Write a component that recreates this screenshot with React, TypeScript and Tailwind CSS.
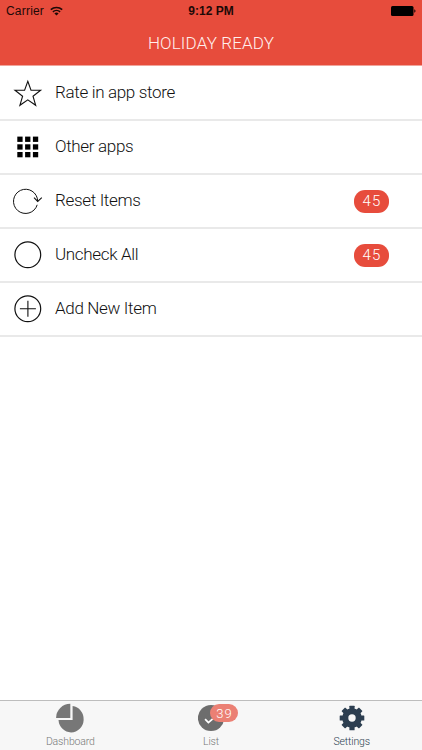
import type { ReactNode } from "react";

function StatusBar() {
  return (
    <div className="flex h-[22px] items-center justify-between pl-[6px] pr-[6px] font-['Liberation_Sans',sans-serif] text-[12px] leading-none text-[#1d0907]">
      <div className="flex flex-1 items-center gap-[6px]">
        <span className="tracking-[0.2px]">Carrier</span>
        <svg width="13" height="10" viewBox="0 0 13 10" fill="none" stroke="currentColor">
          <path d="M.8 3.7a8.3 8.3 0 0 1 11.4 0" strokeWidth="1.6" />
          <path d="M2.9 5.9a5.2 5.2 0 0 1 7.2 0" strokeWidth="1.5" />
          <path d="M6.5 9.6 4.4 7.5a3 3 0 0 1 4.2 0Z" fill="currentColor" stroke="none" />
        </svg>
      </div>
      <span className="font-bold">9:12 PM</span>
      <div className="flex flex-1 justify-end">
        <svg width="25" height="10" viewBox="0 0 25 10">
          <rect x="0" y="0" width="22.5" height="10" rx="1.5" fill="#000" />
          <path d="M23.3 3.3a1.8 1.8 0 0 1 0 3.4Z" fill="#000" />
        </svg>
      </div>
    </div>
  );
}

function RowIcon({ children }: { children: ReactNode }) {
  return (
    <svg className="shrink-0" width="55" height="54" viewBox="0 0 55 54" fill="none" stroke="#111" strokeWidth="1.1">
      {children}
    </svg>
  );
}

function Row({ icon, label, count }: { icon: ReactNode; label: string; count?: number }) {
  return (
    <li className="flex h-[54px] items-center border-b-2 border-[#e9e9e9]">
      <RowIcon>{icon}</RowIcon>
      <span className="mb-[2px] flex-1 text-[17px] leading-5 font-light tracking-[-0.33px] text-[#111]">{label}</span>
      {count !== undefined && (
        <span className="mt-px mr-[33px] flex h-[23px] w-[35px] items-center justify-center rounded-[11px] bg-[#e74c3c] pl-px text-[15px] leading-none font-light tracking-[1.1px] text-white">
          {count}
        </span>
      )}
    </li>
  );
}

function Tab({ icon, label, active }: { icon: ReactNode; label: string; active?: boolean }) {
  return (
    <div className={"flex flex-1 flex-col items-center " + (active ? "text-[#2c3e50]" : "text-[#777]")}>
      <div className="h-[34px]">{icon}</div>
      <span className="text-[10.5px] leading-[13px] font-light tracking-[-0.15px]">{label}</span>
    </div>
  );
}

const teeth = [0, 45, 90, 135, 180, 225, 270, 315];

export default function App() {
  return (
    <div className="flex h-[750px] w-[422px] flex-col overflow-hidden bg-white font-[Roboto,sans-serif]">
      <header className="h-[66px] border-b border-[#f0a49b] bg-[#e74c3c]">
        <StatusBar />
        <h1 className="pt-[11px] text-center text-[17px] leading-5 font-light tracking-[0.15px] text-[#fff0ee]">HOLIDAY READY</h1>
      </header>

      <ul className="flex-1 pt-px">
        <Row
          label="Rate in app store"
          icon={<path d="M27.8 15.3 31 24.3H40.6L33 30.2 35.7 39.3 27.8 33.8 19.9 39.3 22.6 30.2 15 24.3H24.6Z" />}
        />
        <Row
          label="Other apps"
          icon={[0, 1, 2].map((r) =>
            [0, 1, 2].map((c) => (
              <rect key={r + "-" + c} x={17.3 + c * 7.8} y={16.6 + r * 7.7} width="5.3" height="5.3" fill="#000" stroke="none" />
            )),
          )}
        />
        <Row
          label="Reset Items"
          count={45}
          icon={
            <>
              <path d="M37.2 30.8A12.1 12.1 0 1 1 37.7 27.2" strokeWidth="1" />
              <path d="M34 23.7 37.7 27.5 41.8 23.7" />
            </>
          }
        />
        <Row label="Uncheck All" count={45} icon={<circle cx="27.8" cy="26.8" r="12.9" strokeWidth="1.2" />} />
        <Row
          label="Add New Item"
          icon={
            <>
              <circle cx="27.8" cy="26.8" r="12.9" strokeWidth="1.2" />
              <path d="M19.9 26.8h16M27.9 18.8v16" />
            </>
          }
        />
      </ul>

      <nav className="flex h-[50px] border-t border-[#bdbdbd] bg-[#f7f7f7]">
        <Tab
          label="Dashboard"
          icon={
            <svg width="30" height="34" viewBox="0 0 30 34" fill="#777">
              <path d="M17.6 5.1A12.6 13.2 0 1 1 3.5 19.1H17.6Z" />
              <path d="M15.3 2.8V17H1.1A14.2 14.2 0 0 1 15.3 2.8Z" />
            </svg>
          }
        />
        <Tab
          label="List"
          icon={
            <div className="relative">
              <svg width="26" height="34" viewBox="0 0 26 34">
                <circle cx="13" cy="17" r="13.1" fill="#6d6d6d" />
                <path d="m7.1 18.2 3.3 3.4 4.3-3.7" fill="none" stroke="#fff" strokeWidth="1.8" />
              </svg>
              <span className="absolute top-[3px] left-[12px] flex h-[18px] w-[28px] items-center justify-center rounded-[9px] bg-[#eb8074] pl-px text-[13px] leading-none font-light tracking-[1px] text-white">
                39
              </span>
            </div>
          }
        />
        <Tab
          active
          label="Settings"
          icon={
            <svg width="26" height="34" viewBox="0 0 26 34">
              <g fill="#2c3e50">
                {teeth.map((angle) => (
                  <rect key={angle} x="10.4" y="4.7" width="5.2" height="6" rx=".5" transform={"rotate(" + angle + " 13 17)"} />
                ))}
                <circle cx="13" cy="17" r="9.8" />
              </g>
              <circle cx="13" cy="17" r="3.7" fill="#f7f7f7" />
            </svg>
          }
        />
      </nav>
    </div>
  );
}
